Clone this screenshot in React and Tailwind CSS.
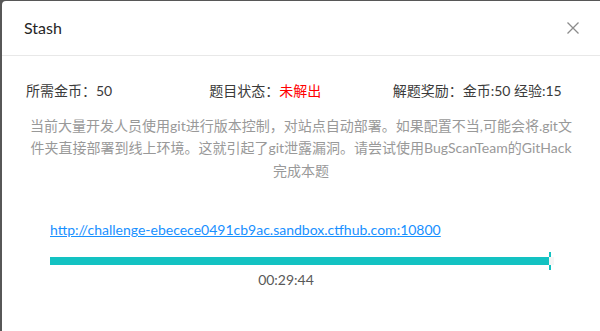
export default function App() {
  return (
    <div className="w-[600px] h-[331px] bg-[#575757] pl-[2px] pt-[1px] overflow-hidden font-['Lato','Noto_Sans_CJK_SC',sans-serif]">
      <div className="w-[598px] h-[330px] bg-white rounded-tl-[4px] flex flex-col">
        <div className="h-[55px] border-b border-[#e8e8e8] flex items-center justify-between pl-[22px] pr-[20px]">
          <span className="text-[16px] text-[#262626] leading-[22px]">Stash</span>
          <svg width="12" height="12" viewBox="0 0 12 12" className="mr-[1px]">
            <path d="M0.5 0.5 L11.5 11.5 M11.5 0.5 L0.5 11.5" stroke="#8c8c8c" strokeWidth="1.3" fill="none" />
          </svg>
        </div>
        <div className="px-[24px] pt-[24px]">
          <div className="grid grid-cols-3 text-[14px] leading-[22px] text-[#3a3a3a]">
            <div>所需金币：50</div>
            <div>题目状态：<span className="text-[#ff0000]">未解出</span></div>
            <div>解题奖励：金币:50 经验:15</div>
          </div>
          <p className="mt-[13px] text-center text-[14px] leading-[22.4px] text-[#999]">
            当前大量开发人员使用git进行版本控制，对站点自动部署。如果配置不当,可能会将.git文件夹直接部署到线上环境。这就引起了git泄露漏洞。请尝试使用BugScanTeam的GitHack完成本题
          </p>
        </div>
        <div className="pl-[48px] pr-[46px] mt-[35px]">
          <a href="#" className="text-[14px] leading-[22px] text-[#1890ff] underline">
            http://challenge-ebecece0491cb9ac.sandbox.ctfhub.com:10800
          </a>
          <div className="relative mt-[16px] h-[8px]">
            <div className="absolute left-[499px] top-[-5px] w-[2px] h-[18px] bg-[#13c2c2]" />
            <div className="relative h-[8px] bg-[#f5f5f5]">
              <div className="h-[8px] bg-[#13c2c2] w-[499px]" />
            </div>
          </div>
          <div className="mt-[5px] text-center pr-[32px] text-[14px] leading-[20px] text-[#595959]">00:29:44</div>
        </div>
      </div>
    </div>
  );
}
